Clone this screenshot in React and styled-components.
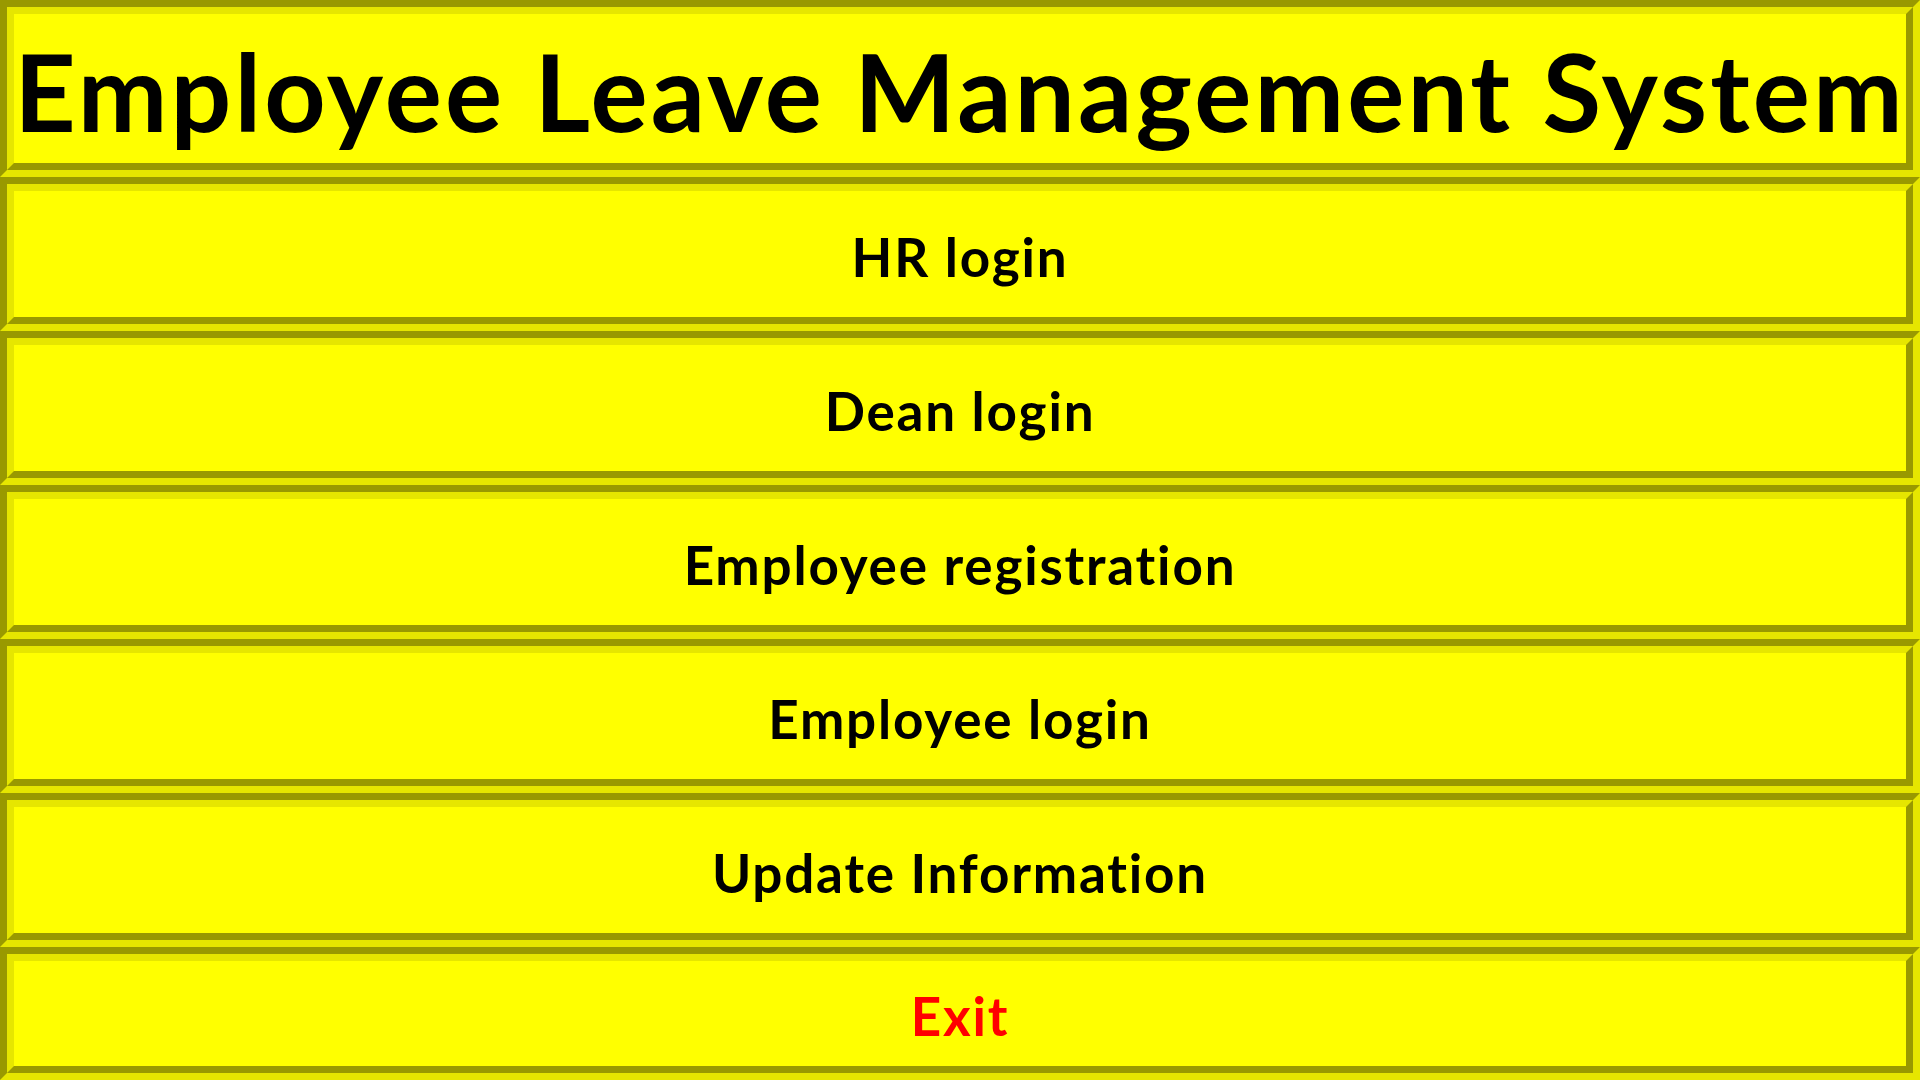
import React from "react";
import styled, { createGlobalStyle } from "styled-components";

const DARK = "#999900";
const LIGHT = "#e6e600";
const FACE = "#ffff00";

const GlobalStyle = createGlobalStyle`
  html, body { margin: 0; padding: 0; background: ${FACE}; }
  body { font-family: Lato, "Open Sans", "Liberation Sans", sans-serif; overflow: hidden; }
  * { box-sizing: border-box; }
`;

const Screen = styled.div`
  width: 100vw;
  height: 100vh;
  display: flex;
  flex-direction: column;
  background: ${FACE};
`;

const Panel = styled.div`
  flex: 0 0 ${(p) => p.$h}px;
  display: flex;
  border-style: solid;
  border-width: 7px;
  border-color: ${DARK} ${LIGHT} ${LIGHT} ${DARK};
`;

const Face = styled.div`
  flex: 1;
  display: flex;
  align-items: center;
  justify-content: center;
  border-style: solid;
  border-width: 7px;
  border-color: ${LIGHT} ${DARK} ${DARK} ${LIGHT};
  background: ${FACE};
  cursor: ${(p) => (p.$button ? "pointer" : "default")};
`;

const Title = styled.h1`
  margin: 0;
  font-family: Lato, "Open Sans", sans-serif;
  font-weight: 700;
  font-size: 107px;
  line-height: 1;
  letter-spacing: 3.15px;
  font-variant-ligatures: none;
  color: #000;
  white-space: nowrap;
  transform: translateY(2px);
`;

const Label = styled.span`
  font-family: Lato, "Open Sans", sans-serif;
  font-weight: 700;
  font-size: 53px;
  line-height: 1;
  letter-spacing: 1.8px;
  font-variant-ligatures: none;
  color: ${(p) => (p.$danger ? "#ff0000" : "#000")};
  white-space: nowrap;
  transform: translateY(2px);
`;

const items = [
  { label: "HR login", h: 154 },
  { label: "Dean login", h: 154 },
  { label: "Employee registration", h: 154 },
  { label: "Employee login", h: 154 },
  { label: "Update Information", h: 154 },
  { label: "Exit", h: 133, danger: true },
];

export default function App() {
  return (
    <>
      <GlobalStyle />
      <Screen>
        <Panel $h={177}>
          <Face>
            <Title>Employee Leave Management System</Title>
          </Face>
        </Panel>
        {items.map((it) => (
          <Panel key={it.label} $h={it.h}>
            <Face $button>
              <Label $danger={it.danger}>{it.label}</Label>
            </Face>
          </Panel>
        ))}
      </Screen>
    </>
  );
}
